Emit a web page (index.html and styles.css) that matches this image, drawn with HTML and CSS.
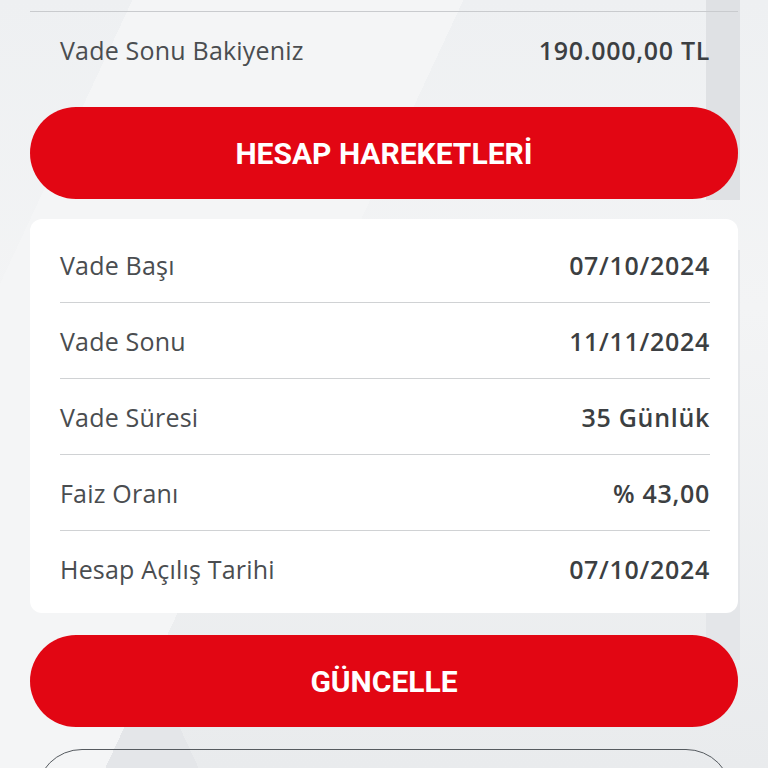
FILE: index.html
```html
<!DOCTYPE html>
<html lang="tr">
<head>
    <meta charset="UTF-8">
    <meta name="viewport" content="width=device-width, initial-scale=1.0">
    <title>Vadeli Hesap Detayı</title>
    <link rel="stylesheet" href="styles.css">
</head>
<body>

<div class="page">
    <div class="summary-row">
        <span class="label">Vade Sonu Bakiyeniz</span>
        <span class="value">190.000,00 TL</span>
    </div>

    <button class="btn btn-red">HESAP HAREKETLERİ</button>

    <div class="card">
        <div class="row">
            <span class="label">Vade Başı</span>
            <span class="value">07/10/2024</span>
        </div>
        <div class="row">
            <span class="label">Vade Sonu</span>
            <span class="value">11/11/2024</span>
        </div>
        <div class="row">
            <span class="label">Vade Süresi</span>
            <span class="value">35 Günlük</span>
        </div>
        <div class="row">
            <span class="label">Faiz Oranı</span>
            <span class="value">% 43,00</span>
        </div>
        <div class="row">
            <span class="label">Hesap Açılış Tarihi</span>
            <span class="value">07/10/2024</span>
        </div>
    </div>

    <button class="btn btn-red">GÜNCELLE</button>

    <button class="btn btn-outline"></button>
</div>

</body>
</html>
```

FILE: styles.css
```css
html, body {
    margin: 0;
    height: 100%;
}
body {
    font-family: 'Open Sans', 'Noto Sans', sans-serif;
    color: #3c3f42;
    background-color: #eceef0;
    background-image:
        linear-gradient(180deg, #dfe1e4 0, #dfe1e4 200px, transparent 200px, transparent 250px, #e4e6e9 250px, #e4e6e9 660px, transparent 660px),
        linear-gradient(115deg, transparent 0, transparent 120px, #f4f5f6 120px, #f4f5f6 420px, transparent 420px),
        linear-gradient(65deg, #e4e6e9 0, #e4e6e9 180px, transparent 180px),
        linear-gradient(180deg, #eef0f2 0, #f3f4f5 40%, #e9ebed 100%);
    background-size: 34px 100%, 100% 100%, 100% 100%, 100% 100%;
    background-position: 706px 0, 0 0, 0 0, 0 0;
    background-repeat: no-repeat;
    overflow: hidden;
}
.page {
    padding: 0 30px;
}
.summary-row {
    display: flex;
    justify-content: space-between;
    align-items: center;
    height: 76px;
    margin: 11px 0 20px;
    padding: 0 28px 0 30px;
    border-top: 1px solid #c9cbce;
    font-size: 25px;
    box-sizing: border-box;
}
.label {
    font-weight: 400;
    letter-spacing: 0.2px;
    color: #4a4d50;
}
.value {
    font-weight: 600;
    letter-spacing: 0.7px;
    color: #3c3f42;
}
.btn {
    display: block;
    width: 100%;
    height: 92px;
    border-radius: 46px;
    font-family: 'Roboto', 'Liberation Sans', sans-serif;
    font-weight: 700;
    font-size: 30px;
    cursor: pointer;
}
.btn-red {
    background-color: #e20613;
    color: #fff;
    border: none;
}
.btn-outline {
    margin: 22px auto 0;
    width: calc(100% - 12px);
    background: transparent;
    border: 1.5px solid #555a5f;
}
.card {
    background-color: #fff;
    border-radius: 12px;
    margin: 20px 0 22px;
    padding: 8px 28px 6px 30px;
}
.row {
    display: flex;
    justify-content: space-between;
    align-items: center;
    height: 76px;
    font-size: 25px;
    border-bottom: 1px solid #d0d2d4;
    box-sizing: border-box;
}
.row:last-child {
    border-bottom: none;
}
```
